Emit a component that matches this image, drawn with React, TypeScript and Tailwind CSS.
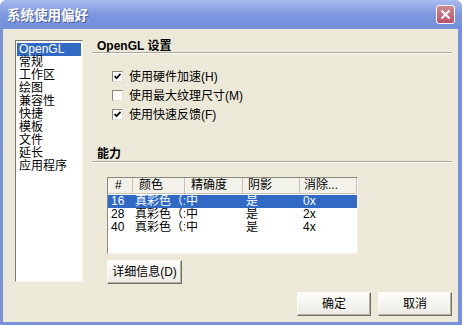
import React from "react";

const F = { fontFamily: '"Liberation Sans", "Noto Sans CJK SC", sans-serif' };

function Check({ checked }: { checked: boolean }) {
  return (
    <div className="w-[11px] h-[11px] bg-white border border-t-[#8a8778] border-l-[#8a8778] border-b-[#e2e0d4] border-r-[#e2e0d4] flex items-center justify-center">
      {checked && (
        <svg width="9" height="9" viewBox="0 0 9 9">
          <path d="M1.5 4 L3.5 6.2 L7.5 1.8" stroke="#111" strokeWidth="1.8" fill="none" />
        </svg>
      )}
    </div>
  );
}

function Btn({ children, w }: { children: React.ReactNode; w: string }) {
  return (
    <div
      className={`${w} h-[24px] flex items-center justify-center text-[12px] text-black bg-gradient-to-b from-[#fdfdfb] to-[#ecebe4] border border-t-[#fbfbf8] border-l-[#fbfbf8] border-b-[#74725f] border-r-[#74725f] shadow-[inset_-1px_-1px_0_#b3b1a3]`}
    >
      {children}
    </div>
  );
}

export default function App() {
  const items = ["OpenGL", "常规", "工作区", "绘图", "兼容性", "快捷", "模板", "文件", "延长", "应用程序"];
  const rows = [
    ["16", "真彩色（:", "中", "是", "0x"],
    ["28", "真彩色（:", "中", "是", "2x"],
    ["40", "真彩色（:", "中", "是", "4x"],
  ];
  const cols = ["w-[25px]", "w-[52px]", "w-[58px]", "w-[57px]", "w-[57px]"];
  const heads = ["#", "颜色", "精确度", "阴影", "消除..."];
  const headPad = ["pl-[7px]", "pl-[6px]", "pl-[6px]", "pl-[5px]", "pl-[4px]"];
  const cellPad = ["pl-[3px]", "pl-[2px]", "pl-[1px]", "pl-[3px]", "pl-[3px]"];

  return (
    <div className="w-[462px] h-[325px] flex flex-col bg-[#7792da] rounded-t-[7px] overflow-hidden" style={F}>
      {/* Title bar */}
      <div className="h-[29px] flex items-center justify-between pl-[7px] pr-[7px] bg-gradient-to-b from-[#a9bbee] via-[#7d97df] to-[#7590dc]">
        <span className="text-white text-[13.5px] font-bold [text-shadow:1px_1px_0_#4a5f9e]" style={{ fontFamily: '"Noto Sans CJK SC", sans-serif' }}>
          系统使用偏好
        </span>
        <div className="w-[19px] h-[19px] rounded-[3px] border border-white bg-gradient-to-b from-[#d08a94] to-[#b8526a] flex items-center justify-center">
          <svg width="11" height="11" viewBox="0 0 11 11">
            <path d="M1.5 1.5 L9.5 9.5 M9.5 1.5 L1.5 9.5" stroke="white" strokeWidth="2" />
          </svg>
        </div>
      </div>

      {/* Body */}
      <div className="flex-1 bg-[#ece9d8] ml-[3px] mr-[4px] mb-[3px] flex flex-col pt-[11px] pl-[12px] pr-[6px]">
        <div className="flex items-start">
          {/* Left list */}
          <div className="w-[68px] h-[242px] bg-white border border-t-[#7a7869] border-l-[#7a7869] border-b-[#f6f5ef] border-r-[#f6f5ef] pt-[2px] px-[1px]">
            {items.map((t, i) => (
              <div
                key={t}
                className={`h-[13px] leading-[13px] text-[12px] pl-[2px] ${i === 0 ? "bg-[#316ac5] text-white" : "text-black"}`}
              >
                {t}
              </div>
            ))}
          </div>

          {/* Right panel */}
          <div className="ml-[9px] w-[360px] flex flex-col">
            <div className="h-[12px] leading-[12px] pl-[5px] text-[12px] font-bold text-black">OpenGL 设置</div>
            <div className="h-[2px] mt-[0px] border-t border-t-[#aca899] border-b border-b-white" />
            <div className="mt-[13px] pl-[20px] flex flex-col">
              {[
                ["使用硬件加速(H)", true],
                ["使用最大纹理尺寸(M)", false],
                ["使用快速反馈(F)", true],
              ].map(([t, c]) => (
                <div key={t as string} className="h-[19px] flex items-center gap-[6px] text-[12px] text-black">
                  <Check checked={c as boolean} />
                  <span>{t as string}</span>
                </div>
              ))}
            </div>
            <div className="mt-[24px] h-[13px] leading-[13px] pl-[5px] text-[12px] font-bold text-black">能力</div>
            <div className="h-[2px] border-t border-t-[#aca899] border-b border-b-white" />

            {/* List view */}
            <div className="mt-[14px] ml-[15px] w-[251px] h-[77px] bg-white border border-t-[#8c8a7c] border-l-[#8c8a7c] border-b-[#f4f3ee] border-r-[#f4f3ee] overflow-hidden">
              <div className="h-[16px] flex bg-[#f3f2ea] border-b border-b-[#c9c6b7]">
                {heads.map((h, i) => (
                  <div
                    key={h}
                    className={`${cols[i]} ${headPad[i]} h-full leading-[15px] text-[12px] text-black border-r border-r-[#c5c2b2] shrink-0 whitespace-nowrap overflow-hidden`}
                  >
                    {h}
                  </div>
                ))}
              </div>
              <div className="pt-[1px]">
                {rows.map((r, ri) => (
                  <div key={ri} className={`h-[13px] flex ${ri === 0 ? "bg-[#316ac5] text-white" : "text-black"}`}>
                    {r.map((c, ci) => (
                      <div
                        key={ci}
                        className={`${cols[ci]} ${cellPad[ci]} leading-[13px] text-[12px] shrink-0 whitespace-nowrap overflow-hidden`}
                      >
                        {c}
                      </div>
                    ))}
                  </div>
                ))}
              </div>
            </div>

            <div className="mt-[6px] ml-[15px]">
              <Btn w="w-[75px]">详细信息(D)</Btn>
            </div>
          </div>
        </div>

        <div className="mt-[8px] flex justify-end gap-[7px]">
          <Btn w="w-[74px]">确定</Btn>
          <Btn w="w-[74px]">取消</Btn>
        </div>
      </div>
    </div>
  );
}
